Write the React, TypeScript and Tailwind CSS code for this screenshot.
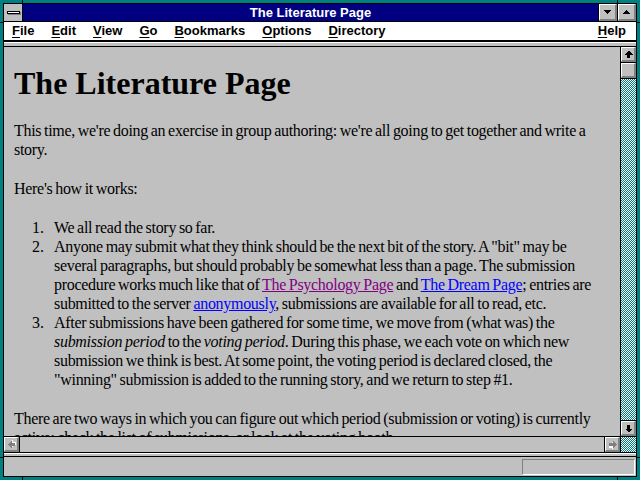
import type { ReactNode } from 'react';

const DITHER =
  'bg-[conic-gradient(#008080_0deg_90deg,#ffffff_90deg_180deg,#008080_180deg_270deg,#ffffff_270deg_360deg)] bg-size-[2px_2px]';

function Arrow({ dir, dim }: { dir: 'up' | 'down' | 'left' | 'right'; dim?: boolean }) {
  // arrow with stem, drawn pointing up then rotated
  const rot = { up: 0, down: 180, left: 270, right: 90 }[dir];
  return (
    <svg width="9" height="9" viewBox="0 0 9 9" shapeRendering="crispEdges">
      <g transform={`rotate(${rot} 4.5 4.5)`}>
        {dim && <polygon points="5.5,1.5 9.5,5.5 7.5,5.5 7.5,8.5 4.5,8.5 4.5,5.5 1.5,5.5" fill="#ffffff" />}
        <polygon points="4.5,0.5 8.5,4.5 6,4.5 6,8 3,8 3,4.5 0.5,4.5" fill={dim ? '#808080' : '#000000'} />
      </g>
    </svg>
  );
}

function Bevel({ children, className = '' }: { children?: ReactNode; className?: string }) {
  return (
    <div
      className={`bg-[#c0c0c0] border-t border-l border-t-white border-l-white border-b-2 border-r-2 border-b-[#808080] border-r-[#808080] flex items-center justify-center ${className}`}
    >
      {children}
    </div>
  );
}

function MenuItem({ k, rest }: { k: string; rest: string }) {
  return (
    <span>
      <u className="underline-offset-2">{k}</u>
      {rest}
    </span>
  );
}

function Num({ n }: { n: number }) {
  return <span className="w-[40px] shrink-0 text-right pr-[10px] tracking-normal">{n}.</span>;
}

export default function App() {
  return (
    <div className="relative w-[640px] h-[480px] bg-[#008080] p-[3px] overflow-hidden">
      {/* frame corner notches */}
      <div className="absolute left-[22px] top-0 w-px h-[3px] bg-black" />
      <div className="absolute left-[617px] top-0 w-px h-[3px] bg-black" />
      <div className="absolute left-[22px] bottom-0 w-px h-[3px] bg-black" />
      <div className="absolute left-[617px] bottom-0 w-px h-[3px] bg-black" />
      <div className="absolute left-0 top-[22px] w-[3px] h-px bg-black" />
      <div className="absolute right-0 top-[22px] w-[3px] h-px bg-black" />
      <div className="absolute left-0 bottom-[22px] w-[3px] h-px bg-black" />
      <div className="absolute right-0 bottom-[22px] w-[3px] h-px bg-black" />

      <div className="h-full flex flex-col border border-black bg-[#c0c0c0] font-['Liberation_Sans',Arial,sans-serif]">
        {/* title bar */}
        <div className="h-[18px] flex border-b border-black bg-[#000080] shrink-0">
          <div className="w-[19px] border-r border-black bg-[#c0c0c0] flex items-center justify-center">
            <div className="w-[13px] h-[3px] bg-white border border-black shadow-[1px_1px_0_#808080]" />
          </div>
          <div className="flex-1 text-center text-white font-bold text-[13px] leading-[17px]">The Literature Page</div>
          <div className="w-[19px] border-l border-black">
            <Bevel className="h-full">
              <svg width="7" height="4" viewBox="0 0 7 4" shapeRendering="crispEdges">
                <polygon points="0,0 7,0 3.5,4" fill="#000" />
              </svg>
            </Bevel>
          </div>
          <div className="w-[19px] border-l border-black">
            <Bevel className="h-full">
              <svg width="7" height="4" viewBox="0 0 7 4" shapeRendering="crispEdges">
                <polygon points="3.5,0 7,4 0,4" fill="#000" />
              </svg>
            </Bevel>
          </div>
        </div>

        {/* menu bar */}
        <div className="h-[19px] flex items-center bg-white border-b border-black shrink-0 pl-[8px] pr-[10px] gap-[17px] text-[13px] font-bold text-black leading-[18px]">
          <MenuItem k="F" rest="ile" />
          <MenuItem k="E" rest="dit" />
          <MenuItem k="V" rest="iew" />
          <MenuItem k="G" rest="o" />
          <MenuItem k="B" rest="ookmarks" />
          <MenuItem k="O" rest="ptions" />
          <MenuItem k="D" rest="irectory" />
          <span className="ml-auto">
            <MenuItem k="H" rest="elp" />
          </span>
        </div>

        {/* collapsed toolbar strip */}
        <div className="h-[6px] shrink-0 border-t border-black border-b bg-[#c0c0c0]">
          <div className="h-px bg-white" />
        </div>

        {/* main */}
        <div className="h-[389px] flex shrink-0">
          <div className="flex-1 overflow-hidden pl-[10px] pr-[10px] pt-[18px] font-['Liberation_Serif','Times_New_Roman',serif] text-[16px] leading-[19px] text-black">
            <h1 className="text-[32px] leading-[37px] font-bold mb-[19px]">The Literature Page</h1>
            <div className="tracking-[-0.3px] [word-spacing:-0.9px]">
              <p className="mb-[20px]">
                This time, we're doing an exercise in group authoring: we're all going to get together and write a
                story.
              </p>
              <p className="mb-[20px]">Here's how it works:</p>
              <ol className="mb-[20px]">
                <li className="flex">
                  <Num n={1} />
                  <span>We all read the story so far.</span>
                </li>
                <li className="flex">
                  <Num n={2} />
                  <span>
                    Anyone may submit what they think should be the next bit of the story. A "bit" may be several
                    paragraphs, but should probably be somewhat less than a page. The submission procedure works much
                    like that of <a className="text-[#800080] underline">The Psychology Page</a> and{' '}
                    <a className="text-[#0000ff] underline">The Dream Page</a>; entries are submitted to the server{' '}
                    <a className="text-[#0000ff] underline">anonymously</a>, submissions are available for all to
                    read, etc.
                  </span>
                </li>
                <li className="flex">
                  <Num n={3} />
                  <span>
                    After submissions have been gathered for some time, we move from (what was) the{' '}
                    <i>submission period</i> to the <i>voting period</i>. During this phase, we each vote on which new
                    submission we think is best. At some point, the voting period is declared closed, the "winning"
                    submission is added to the running story, and we return to step #1.
                  </span>
                </li>
              </ol>
              <p>
                There are two ways in which you can figure out which period (submission or voting) is currently
                active: check the list of submissions, or look at the voting booth.
              </p>
            </div>
          </div>

          {/* vertical scrollbar */}
          <div className="w-[16px] shrink-0 border-l border-black flex flex-col">
            <div className="h-[16px] border-b border-black">
              <Bevel className="h-full">
                <Arrow dir="up" />
              </Bevel>
            </div>
            <div className="h-[16px] border-b border-black">
              <Bevel className="h-full" />
            </div>
            <div className={`flex-1 ${DITHER}`} />
            <div className="h-[16px] border-t border-black">
              <Bevel className="h-full">
                <Arrow dir="down" />
              </Bevel>
            </div>
          </div>
        </div>

        {/* horizontal scrollbar */}
        <div className="h-[17px] shrink-0 flex border-t border-b border-black">
          <div className="w-[16px] border-r border-black">
            <Bevel className="h-full">
              <Arrow dir="left" dim />
            </Bevel>
          </div>
          <div className="flex-1 bg-[#c0c0c0]" />
          <div className="w-[17px] border-l border-r border-black">
            <Bevel className="h-full">
              <Arrow dir="right" dim />
            </Bevel>
          </div>
          <div className={`w-[15px] ${DITHER}`} />
        </div>

        <div className="h-[4px] shrink-0 border-t border-white border-b border-b-black bg-[#c0c0c0]" />

        {/* status bar */}
        <div className="flex-1 flex items-start justify-end pt-[2px] pr-[1px]">
          <div className="w-[113px] h-[16px] border-t border-l border-t-[#808080] border-l-[#808080] border-b border-r border-b-white border-r-white" />
        </div>
      </div>
    </div>
  );
}
